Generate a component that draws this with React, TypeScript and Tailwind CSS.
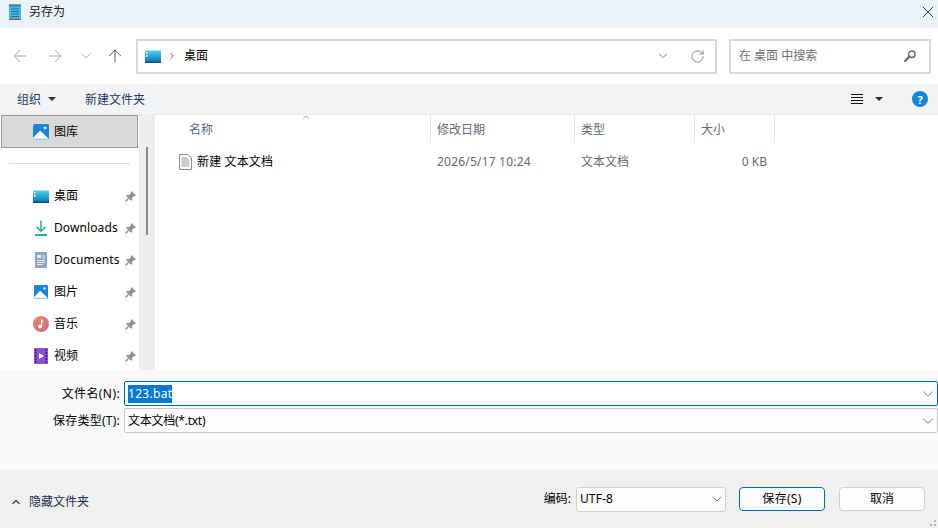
import { ChevronDown, ChevronRight, ChevronUp, ArrowLeft, ArrowRight, ArrowUp, RotateCw, X } from 'lucide-react';

const font = { fontFamily: '"Noto Sans", "Noto Sans CJK SC", sans-serif' };

function DesktopIcon() {
  return (
    <svg width="16" height="13" viewBox="0 0 16 13">
      <defs>
        <linearGradient id="desk" x1="0" y1="0" x2="0" y2="1">
          <stop offset="0" stopColor="#4fd0ee" />
          <stop offset="1" stopColor="#0d76b8" />
        </linearGradient>
      </defs>
      <rect x="0" y="0.5" width="16" height="11.5" rx="1" fill="url(#desk)" />
      <rect x="1" y="2" width="1.6" height="1.6" fill="#fff" />
      <rect x="1" y="5" width="1.6" height="1.6" fill="#fff" />
      <rect x="0" y="11.5" width="16" height="1.5" fill="#0b4f80" />
    </svg>
  );
}

function PicIcon({ size = 14 }: { size?: number }) {
  return (
    <svg width={size} height={size} viewBox="0 0 16 16">
      <rect width="16" height="16" rx="1.5" fill="#1a86d9" />
      <circle cx="12" cy="4" r="1.3" fill="#fff" />
      <path d="M0 14 L7 6.5 L15 14 V16 H0 Z" fill="#fff" />
      <path d="M0 14.5 H16 V16 H0 Z" fill="#9fd0f2" />
    </svg>
  );
}

function DownloadIcon() {
  return (
    <svg width="14" height="16" viewBox="0 0 14 16" fill="none" stroke="#1fb58f" strokeWidth="1.5">
      <path d="M7 0.5 V11 M2.5 6.8 L7 11.2 L11.5 6.8" />
      <path d="M1 15 H13" strokeWidth="2" />
    </svg>
  );
}

function DocsIcon() {
  return (
    <svg width="12" height="16" viewBox="0 0 12 16">
      <rect width="12" height="16" rx="1" fill="#8fa7c4" />
      <rect x="2" y="3" width="4" height="3" fill="#e9eef5" />
      <path d="M7 4 H10 M7 6 H10 M2 8.5 H10 M2 10.5 H10 M2 12.5 H8" stroke="#e9eef5" strokeWidth="1" />
    </svg>
  );
}

function MusicIcon() {
  return (
    <svg width="16" height="16" viewBox="0 0 16 16">
      <defs>
        <linearGradient id="mus" x1="0" y1="0" x2="1" y2="1">
          <stop offset="0" stopColor="#ec8a4f" />
          <stop offset="1" stopColor="#c96aa0" />
        </linearGradient>
      </defs>
      <circle cx="8" cy="8" r="8" fill="url(#mus)" />
      <path d="M8.6 3.5 V10.3" stroke="#fff" strokeWidth="1.3" />
      <path d="M8.6 3.5 C9 5 10.5 5 11 6.2" stroke="#fff" strokeWidth="1" fill="none" />
      <circle cx="7" cy="10.6" r="1.9" fill="#fff" />
    </svg>
  );
}

function VideoIcon() {
  return (
    <svg width="14" height="16" viewBox="0 0 14 16">
      <rect width="14" height="16" rx="1" fill="#8b4fd8" />
      <path d="M5 5 L10 8 L5 11 Z" fill="#fff" />
      <path d="M1 2 H2.5 M1 5 H2.5 M1 8 H2.5 M1 11 H2.5 M1 14 H2.5 M11.5 2 H13 M11.5 5 H13 M11.5 8 H13 M11.5 11 H13 M11.5 14 H13" stroke="#2c1a5c" strokeWidth="1.4" />
    </svg>
  );
}

function PinIcon() {
  return (
    <svg width="11" height="11" viewBox="0 0 11 11" fill="#8d9299">
      <path d="M6.5 0 L11 4.5 L9.6 5.4 L8.8 5 L7 7 L7.2 8.9 L6 9.8 L1.2 5 L2.1 3.8 L4 4 L6 2.2 L5.6 1.4 Z" />
      <path d="M3.4 7.6 L0.6 10.4" stroke="#8d9299" strokeWidth="1.4" />
    </svg>
  );
}

function SearchIcon() {
  return (
    <svg width="12" height="12" viewBox="0 0 12 12" fill="none" stroke="#6e6e6e" className="ml-auto">
      <circle cx="7.8" cy="4.2" r="3.2" strokeWidth="1.5" />
      <path d="M5.4 6.6 L1 11" strokeWidth="2.2" strokeLinecap="round" />
    </svg>
  );
}

function NotepadIcon() {
  return (
    <svg width="12" height="16" viewBox="0 0 12 16">
      <rect x="0" y="1" width="12" height="14" fill="#4db6e6" />
      <path d="M2 5 H10 M2 7.5 H10 M2 10 H10 M2 12.5 H10" stroke="#0f5f8c" strokeWidth="0.8" />
      <path d="M1 0 V2.5 M3 0 V2.5 M5 0 V2.5 M7 0 V2.5 M9 0 V2.5 M11 0 V2.5" stroke="#14506f" strokeWidth="1" />
      <rect x="0" y="14.8" width="12" height="1.2" fill="#8a5a3c" />
    </svg>
  );
}

function TextFileIcon() {
  return (
    <svg width="13" height="16" viewBox="0 0 13 16" fill="#fff" stroke="#8a8a8a" strokeWidth="1">
      <path d="M0.5 0.5 H9 L12.5 4 V15.5 H0.5 Z" />
      <path d="M2.5 4 H8 M2.5 6 H10.5 M2.5 8 H10.5 M2.5 10 H10.5 M2.5 12 H10.5" stroke="#9a9a9a" fill="none" />
    </svg>
  );
}

function HelpIcon() {
  return (
    <div className="flex h-4 w-4 items-center justify-center rounded-full bg-[#1086d8] text-[11px] font-bold leading-none text-white">?</div>
  );
}

const navItems = [
  { name: '桌面', icon: <DesktopIcon /> },
  { name: 'Downloads', icon: <DownloadIcon /> },
  { name: 'Documents', icon: <DocsIcon /> },
  { name: '图片', icon: <PicIcon /> },
  { name: '音乐', icon: <MusicIcon /> },
  { name: '视频', icon: <VideoIcon /> },
];

const columns = [
  { name: '修改日期', width: 'w-[144px]' },
  { name: '类型', width: 'w-[120px]' },
  { name: '大小', width: 'w-[80px]' },
];

export default function App() {
  return (
    <div style={font} className="relative flex h-[528px] w-[938px] flex-col overflow-hidden bg-white text-xs text-black">
      {/* 제목 표시줄 */}
      <div className="flex h-[28px] shrink-0 items-center bg-[#eaf3fa] pb-[4px] pl-[9px]">
        <NotepadIcon />
        <span className="ml-2 text-[#1a1a1a]">另存为</span>
        <X size={20} strokeWidth={0.9} className="ml-auto" />
      </div>

      {/* 주소줄 */}
      <div className="flex h-[56px] shrink-0 items-center pl-[10px]">
        <ArrowLeft size={20} strokeWidth={1} className="text-[#9a9a9a]" />
        <ArrowRight size={20} strokeWidth={1} className="ml-[15px] text-[#9a9a9a]" />
        <ChevronDown size={16} strokeWidth={1.2} className="ml-[13px] text-[#9a9a9a]" />
        <ArrowUp size={20} strokeWidth={1} className="ml-[11px] text-[#444444]" />
        <div className="ml-[11px] flex h-[35px] w-[581px] items-center border-2 border-[#d9d9d9] pl-[7px] pr-[10px]">
          <DesktopIcon />
          <ChevronRight size={10} strokeWidth={2.2} className="ml-[6px] text-[#555555]" />
          <span className="ml-[7px]">桌面</span>
          <ChevronDown size={14} strokeWidth={1.2} className="ml-auto text-[#555555]" />
          <RotateCw size={15} strokeWidth={1.2} className="ml-[20px] text-[#666666]" />
        </div>
        <div className="ml-[12px] flex h-[35px] w-[202px] items-center border-2 border-[#d9d9d9] pl-[8px] pr-[13px] text-[#707070]">
          <span>在 桌面 中搜索</span>
          <SearchIcon />
        </div>
      </div>

      {/* 도구 모음 */}
      <div className="flex h-[31px] shrink-0 items-center border-b border-[#ececec] bg-[#f3f4f6] pl-[17px] pr-[10px] text-[#1f3a5f]">
        <span className="pt-[1px]">组织</span>
        <span className="ml-[7px] h-0 w-0 border-x-[4px] border-t-[4px] border-x-transparent border-t-[#1f2f4f]" />
        <span className="ml-[29px] pt-[1px]">新建文件夹</span>
        <svg width="12" height="10" viewBox="0 0 12 10" className="ml-auto" stroke="#111" strokeWidth="1">
          <path d="M0 0.5 H12 M0 3.5 H12 M0 6.5 H12 M0 9.5 H12" />
        </svg>
        <span className="ml-[12px] h-0 w-0 border-x-[4px] border-t-[4px] border-x-transparent border-t-[#1f2f4f]" />
        <span className="ml-[29px]"><HelpIcon /></span>
      </div>

      {/* 본문 */}
      <div className="flex min-h-0 flex-1">
        <div className="flex w-[139px] shrink-0 flex-col overflow-hidden">
          <div className="mx-[1px] flex h-[33px] shrink-0 items-center border border-[#999999] bg-[#d9d9d9] pl-[31px]">
            <PicIcon size={16} />
            <span className="ml-[5px]">图库</span>
          </div>
          <div className="ml-[9px] mt-[15px] h-px w-[121px] shrink-0 bg-[#dcdcdc]" />
          <div className="mt-[16px] flex shrink-0 flex-col">
            {navItems.map((item) => (
              <div key={item.name} className="flex h-[32px] shrink-0 items-center pr-[3px]">
                <div className="flex w-[54px] justify-end pr-[5px]">
                  <div className="flex w-[16px] justify-center">{item.icon}</div>
                </div>
                <span className="tracking-[0.1px]">{item.name}</span>
                <span className="ml-auto"><PinIcon /></span>
              </div>
            ))}
          </div>
        </div>

        <div className="flex w-[16px] shrink-0 justify-center bg-[#eeeeee] pt-[32px]">
          <div className="h-[88px] w-[2px] bg-[#8a8a8a]" />
        </div>

        <div className="ml-[2px] flex-1">
          <div className="relative flex h-[28px] text-[#5a6b80]">
            <div className="flex w-[274px] items-center border-r border-[#e5e5e5] pl-[32px] pt-[2px]">名称</div>
            <ChevronUp size={10} strokeWidth={1.5} className="absolute left-[144px] top-[-3px] text-[#666666]" />
            {columns.map((col) => (
              <div key={col.name} className={`flex items-center border-r border-[#e5e5e5] pl-[6px] pt-[2px] ${col.width}`}>{col.name}</div>
            ))}
          </div>
          <div className="mt-[5px] flex h-[28px] items-center text-[#6a6a6a]">
            <div className="flex w-[280px] items-center pl-[22px] text-black">
              <TextFileIcon />
              <span className="ml-[5px] tracking-[0.15px]">新建 文本文档</span>
            </div>
            <div className="w-[144px] tracking-[0.2px]">2026/5/17 10:24</div>
            <div className="w-[97px]">文本文档</div>
            <div className="w-[89px] text-right">0 KB</div>
          </div>
        </div>
      </div>

      {/* 파일 이름 입력 */}
      <div className="flex h-[100px] shrink-0 flex-col gap-[2px] bg-[#f9f9f9] pl-[8px] pt-[11px]">
        <div className="flex h-[25px] items-center">
          <label className="w-[112px] text-right tracking-[0.4px]">文件名(N):</label>
          <div className="ml-[4px] flex h-full flex-1 items-center rounded-[2px] border border-[#0067c0] bg-white pl-[3px]">
            <span className="bg-[#0078d4] leading-[18px] tracking-[0.3px] text-white">123.bat</span>
            <ChevronDown size={18} strokeWidth={1} className="ml-auto text-[#555555]" />
          </div>
        </div>
        <div className="flex h-[25px] items-center">
          <label className="w-[112px] text-right tracking-[0.25px]">保存类型(T):</label>
          <div className="ml-[4px] flex h-full flex-1 items-center rounded-[2px] border border-[#c8c8c8] bg-[#fdfdfd] pl-[3px]">
            <span className="tracking-[-0.25px]">文本文档(*.txt)</span>
            <ChevronDown size={18} strokeWidth={1} className="ml-auto text-[#555555]" />
          </div>
        </div>
      </div>

      {/* 하단 */}
      <div className="flex h-[58px] shrink-0 items-center bg-[#f0f0f0] pl-[10px] pr-[13px]">
        <ChevronUp size={12} strokeWidth={2.5} className="mt-[6px] text-[#444444]" />
        <span className="ml-[7px] mt-[6px] text-[#1a2f4d]">隐藏文件夹</span>
        <span className="ml-auto">编码:</span>
        <div className="ml-[5px] flex h-[25px] w-[150px] items-center rounded-[3px] border border-[#d0d0d0] bg-[#fdfdfd] pl-[3px]">
          <span className="tracking-[0.1px]">UTF-8</span>
          <ChevronDown size={16} strokeWidth={1.1} className="ml-auto text-[#555555]" />
        </div>
        <button className="ml-[13px] h-[24px] w-[86px] rounded-[4px] border border-[#0067c0] bg-[#fdfdfd] tracking-[0.3px]">保存(S)</button>
        <button className="ml-[14px] h-[24px] w-[86px] rounded-[4px] border border-[#d0d0d0] bg-[#fdfdfd]">取消</button>
      </div>

      {/* 크기 조절 손잡이 */}
      <svg width="8" height="8" viewBox="0 0 8 8" fill="#b5b5b5" className="absolute bottom-[1px] right-[1px]">
        <rect x="5" y="1" width="2" height="2" />
        <rect x="1" y="5" width="2" height="2" />
        <rect x="5" y="5" width="2" height="2" />
      </svg>
    </div>
  );
}
